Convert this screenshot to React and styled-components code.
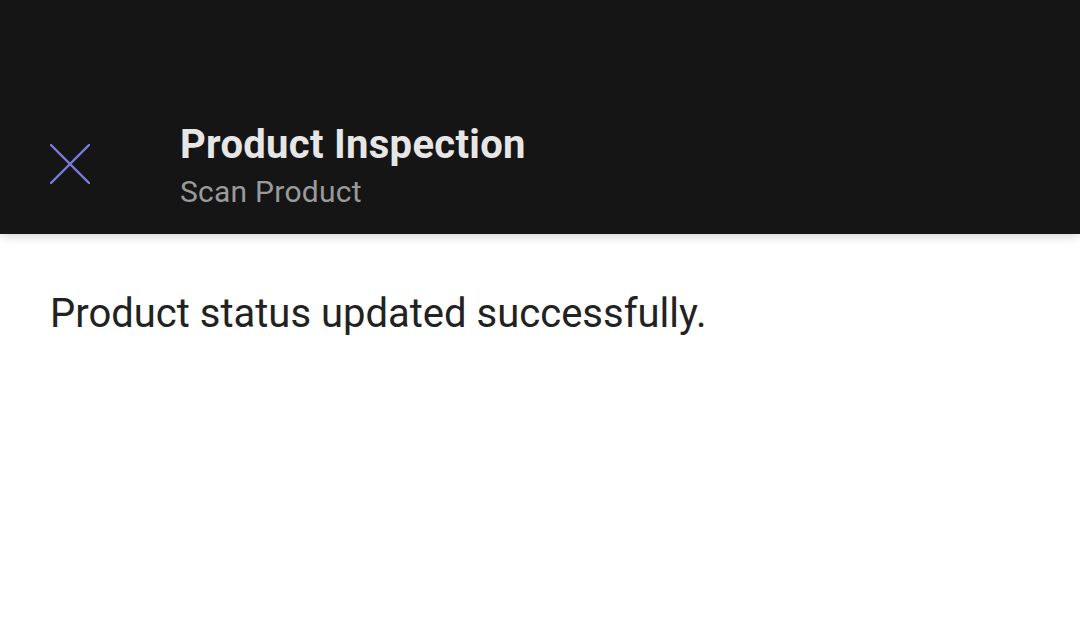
import React from 'react';
import styled, { createGlobalStyle } from 'styled-components';

const GlobalStyle = createGlobalStyle`
	html, body {
		margin: 0;
		padding: 0;
		background: #ffffff;
		font-family: Roboto, "Liberation Sans", sans-serif;
	}
`;

const Page = styled.div`
	width: 1080px;
	height: 641px;
	overflow: hidden;
	background: #ffffff;
`;

const Header = styled.header`
	height: 234px;
	background: #151515;
	box-shadow: 0 2px 10px rgba(0, 0, 0, 0.18);
	display: flex;
	align-items: flex-end;
	padding: 0 0 24px 50px;
	box-sizing: border-box;
	position: relative;
`;

const CloseButton = styled.button`
	width: 40px;
	height: 40px;
	padding: 0;
	margin: 0 90px 26px 0;
	border: none;
	background: none;
	cursor: pointer;
	display: flex;
	align-items: center;
	justify-content: center;
`;

const Titles = styled.div`
	display: flex;
	flex-direction: column;
`;

const Title = styled.h1`
	margin: 0;
	font-size: 40px;
	font-weight: 700;
	line-height: 46px;
	letter-spacing: 0.3px;
	color: #e6e6e6;
`;

const Subtitle = styled.p`
	margin: 6px 0 0;
	font-size: 30px;
	line-height: 36px;
	letter-spacing: 0.25px;
	color: #9a9a9a;
`;

const Content = styled.main`
	padding: 56px 50px;
`;

const Message = styled.p`
	margin: 0;
	font-size: 40px;
	line-height: 48px;
	color: #222222;
`;

const App = () => (
	<Page>
		<GlobalStyle />
		<Header>
			<CloseButton aria-label="Close">
				<svg width="40" height="40" viewBox="0 0 40 40">
					<path
						d="M1 1 L39 39 M39 1 L1 39"
						stroke="#7b7be0"
						strokeWidth="2.4"
						strokeLinecap="round"
					/>
				</svg>
			</CloseButton>
			<Titles>
				<Title>Product Inspection</Title>
				<Subtitle>Scan Product</Subtitle>
			</Titles>
		</Header>
		<Content>
			<Message>Product status updated successfully.</Message>
		</Content>
	</Page>
);

export default App;
